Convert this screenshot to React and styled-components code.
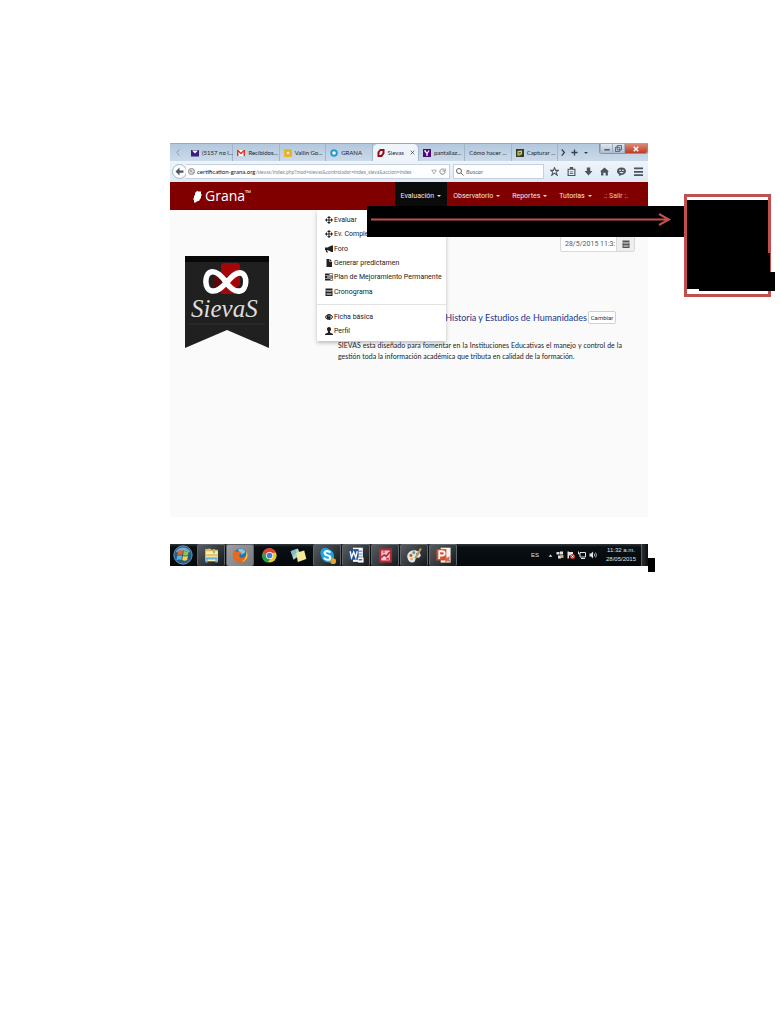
import React from "react";
import styled, { createGlobalStyle, css } from "styled-components";

const body = 'Roboto, "Liberation Sans", Arial, sans-serif';
const ui = 'Lato, "Open Sans", sans-serif';
const brand = '"Open Sans", "Noto Sans", sans-serif';

const GlobalStyle = createGlobalStyle`
  *, *::before, *::after { box-sizing: border-box; }
  body { margin: 0; background: #fff; font-family: ${body}; color: #333; }
  button, input { font: inherit; color: inherit; margin: 0; padding: 0; border: 0; background: none; }
  svg { display: block; flex: none; }
`;

const Page = styled.main`
  min-height: 100vh;
  padding: 143px 133px 0 170px;
`;
const Capture = styled.div`
  position: relative;
`;

/* Browser chrome */
const TabStrip = styled.div`
  display: flex;
  height: 18px;
  background: linear-gradient(#b3c8dd, #cbdaea);
  border-top: 1px solid #9aa9ba;
  font: 6px/17px ${ui};
  color: #1c252e;
`;
const StripButton = styled.button`
  width: ${(p) => p.$w || 11}px;
  display: grid;
  place-items: center;
  color: ${(p) => (p.$dim ? "#8195aa" : "#333f4c")};
`;
const Tabs = styled.div`
  flex: 1;
  min-width: 0;
  display: flex;
`;
const Tab = styled.button`
  flex: 1 1 0;
  min-width: 0;
  display: flex;
  align-items: center;
  gap: 3px;
  padding: 0 3px 0 4px;
  border-right: 1px solid #a3b5c8;
  white-space: nowrap;
  ${(p) =>
    p.$active &&
    css`
      background: #eef4fa;
      border-radius: 5px 5px 0 0;
    `}
`;
const TabLabel = styled.span`
  flex: 1;
  text-align: left;
`;
const WindowControls = styled.div`
  display: flex;
  width: 49px;
  height: 10px;
  border: 1px solid #8593a3;
  border-top: 0;
  border-radius: 0 0 3px 3px;
  overflow: hidden;
`;
const WindowButton = styled.button`
  flex: ${(p) => (p.$close ? 2 : 1)};
  display: grid;
  place-items: center;
  color: ${(p) => (p.$close ? "#fff" : "#4d5b6b")};
  background: ${(p) =>
    p.$close ? "linear-gradient(#d98a78, #c03a22)" : "linear-gradient(#dfe7f0, #aebdcf)"};
  border-left: 1px solid #a1afbf;
`;
const AddressBar = styled.div`
  display: flex;
  align-items: center;
  height: 21px;
  padding: 0 5px 0 2px;
  background: linear-gradient(#eef4fa, #dfe9f4);
  font: 6px/14px ${ui};
`;
const BackButton = styled.button`
  width: 15px;
  height: 15px;
  flex: none;
  display: grid;
  place-items: center;
  border: 1px solid #aab7c5;
  border-radius: 50%;
  background: #fbfdff;
  color: #4a5561;
`;
const Field = styled.label`
  display: flex;
  align-items: center;
  gap: 2px;
  height: 15px;
  padding: 0 3px 0 2px;
  background: #fdfeff;
  border: 1px solid #c6d1dd;
  min-width: 0;
`;
const UrlField = styled(Field)`
  flex: 1;
  margin-left: -1px;
  border-left: 0;
`;
const SearchField = styled(Field)`
  width: 91px;
  margin-left: 3px;
`;
const Url = styled.div`
  flex: 1;
  white-space: nowrap;
  color: #7f868d;
  font-size: 5px;
  b { font-weight: 400; font-size: 6px; color: #111; }
`;
const TextInput = styled.input`
  width: 100%;
  min-width: 0;
  outline: 0;
  &::placeholder { color: #666; font-style: italic; opacity: 1; }
`;
const Tools = styled.div`
  display: flex;
  justify-content: space-between;
  width: 93px;
  margin-left: 6px;
  color: #4a5561;
`;
const IconButton = styled.button`
  display: grid;
  place-items: center;
`;

/* Site */
const SiteHeader = styled.header`
  display: flex;
  justify-content: space-between;
  height: 28px;
  padding: 0 14px 0 23px;
  background: #800000;
`;
const Brand = styled.a`
  display: flex;
  align-items: center;
  gap: 3px;
  color: #fff;
  text-decoration: none;
  font: 14px/28px ${brand};
  sup { font-size: 8px; line-height: 0; vertical-align: 5px; }
`;
const Nav = styled.nav`
  display: flex;
`;
const NavLink = styled.a`
  display: flex;
  align-items: center;
  gap: 3px;
  padding: 0 6px;
  color: ${(p) => (p.$dim ? "#e0c4c4" : "#f0e6e6")};
  background: ${(p) => (p.$active ? "#0b0b0b" : "transparent")};
  font-size: 7px;
  text-decoration: none;
  white-space: nowrap;
`;
const Caret = styled.span`
  border: 2px solid transparent;
  border-top-color: currentColor;
  border-bottom: 0;
`;
const Content = styled.section`
  position: relative;
  display: flex;
  gap: 69px;
  min-height: 307px;
  padding: 26px 26px 0 15px;
  background: #fafafa;
`;
const Emblem = styled.div`
  flex: none;
  margin-top: 20px;
`;
const Main = styled.div`
  flex: 1;
  min-width: 0;
`;
const DateGroup = styled.div`
  display: flex;
  width: 75px;
  height: 16px;
  margin: 0 -13px 0 auto;
  border: 1px solid #d8d8d8;
  border-radius: 2px;
  background: #fff;
  font-size: 7px;
  color: #555;
`;
const DateInput = styled.input`
  flex: 1;
  min-width: 0;
  padding-left: 4px;
  outline: 0;
`;
const DateButton = styled.button`
  width: 18px;
  display: grid;
  place-items: center;
  background: #eee;
  border-left: 1px solid #d8d8d8;
`;
const TitleRow = styled.div`
  display: flex;
  justify-content: flex-end;
  align-items: center;
  gap: 1px;
  margin: 59px 6px 0 0;
`;
const Title = styled.h1`
  margin: 0;
  font: 400 9px/12px ${ui};
  color: #17388a;
  white-space: nowrap;
`;
const ChangeButton = styled.button`
  width: 28px;
  height: 13px;
  border: 1px solid #d0d0d0;
  border-radius: 2px;
  background: #fff;
  font-size: 6px;
  line-height: 10px;
`;
const Intro = styled.p`
  margin: 16px 0 0;
  font: 7px/11px ${ui};
  color: #222;
  text-align: justify;
`;
const Menu = styled.div`
  position: absolute;
  left: 147px;
  top: 0;
  width: 129px;
  padding: 3px 0;
  background: #fff;
  box-shadow: 0 2px 4px rgba(0, 0, 0, 0.25);
`;
const MenuGroup = styled.ul`
  display: grid;
  grid-auto-rows: 1fr;
  min-height: ${(p) => p.$h}px;
  margin: 0;
  padding: 0 8px;
  list-style: none;
`;
const MenuLink = styled.a`
  display: flex;
  align-items: center;
  gap: 1px;
  height: 100%;
  font-size: 7px;
  line-height: 14px;
  color: #222;
  text-decoration: none;
  white-space: nowrap;
`;
const Rule = styled.hr`
  height: 1px;
  margin: 5px 0;
  border: 0;
  background: #e2e2e2;
`;

/* Taskbar */
const Taskbar = styled.footer`
  display: flex;
  height: 22px;
  margin-top: 27px;
  background: linear-gradient(#30363a, #0a0f13 3px, #05090c);
  color: #dde2e6;
`;
const Start = styled.button`
  width: 26px;
  display: grid;
  place-items: center;
`;
const Task = styled.button`
  width: 28px;
  margin-left: 1px;
  display: grid;
  place-items: center;
  ${(p) =>
    p.$open &&
    css`
      border: 1px solid #5e6468;
      border-bottom: 0;
      border-radius: 2px;
      background: ${p.$current ? "linear-gradient(135deg, #9d9fa4, #77797f)" : "linear-gradient(135deg, #575c60, #15191c)"};
    `}
`;
const Tray = styled.div`
  display: flex;
  align-items: center;
  gap: 3px;
  margin-left: auto;
  font: 6px/9px "Liberation Sans", sans-serif;
`;
const Lang = styled.span`
  margin-right: 6px;
`;
const Clock = styled.time`
  margin: 0 2px 0 6px;
  text-align: center;
  white-space: nowrap;
`;
const ShowDesktop = styled.button`
  width: 7px;
  height: 22px;
  border-left: 1px solid #555b60;
  background: linear-gradient(90deg, #2c3135, #0a0d10);
`;

/* Annotations laid over the capture */
const Strike = styled.div`
  position: absolute;
  left: 197px;
  top: 63px;
  width: 318px;
  height: 31px;
  background: #000;
`;
const Callout = styled.div`
  position: absolute;
  left: 514px;
  top: 51px;
  width: 91px;
  height: 103px;
`;
const Nub = styled.div`
  position: absolute;
  left: 478px;
  top: 415px;
  width: 7px;
  height: 14px;
  background: #000;
`;

const Svg = ({ s = 8, h, v = 16, children }) => (
  <svg width={s} height={h || s} viewBox={`0 0 ${v} ${v}`} fill="currentColor" aria-hidden="true">
    {children}
  </svg>
);

const glyphs = {
  move: <path d="M8 0l4 4H9v3h3V4l4 4-4 4V9H9v3h3l-4 4-4-4h3V9H4v3L0 8l4-4v3h3V4H4z" />,
  horn: <path d="M0 5h5l8-4v13l-8-4H4l2 5H3L1 10H0zM13 1h3v13h-3z" />,
  file: <path d="M3 0h6v6h5v10H3zM10 0l4 5h-4z" />,
  tasks: <path fillRule="evenodd" d="M0 1h16v4H0zM9 2v2h6V2zM0 6h16v4H0zM4 7v2h11V7zM0 11h16v4H0zM11 12v2h4v-2z" />,
  calendar: <path fillRule="evenodd" d="M1 1h14v3H1zM1 5h14v11H1zM3 7v1h10V7zM3 10v1h10v-1zM3 13v1h10v-1z" />,
  eye: <path fillRule="evenodd" d="M8 2c4 0 7 4 8 6-1 2-4 6-8 6S1 10 0 8c1-2 4-6 8-6zM2 8c1 2 3 4 6 4s5-2 6-4c-1-1-2-3-4-3a4 4 0 1 1-5 0C4 5 3 7 2 8zM7 5v2h2V5z" />,
  user: <path d="M8 0c3 0 4 2 4 4s-1 4-2 5v2l6 3v2H0v-2l6-3V9C5 8 4 6 4 4s1-4 4-4z" />,
};

const menuTop = [
  ["move", "Evaluar"],
  ["move", "Ev. Complementaria"],
  ["horn", "Foro"],
  ["file", "Generar predictamen"],
  ["tasks", "Plan de Mejoramiento Permanente"],
  ["calendar", "Cronograma"],
];
const menuBottom = [
  ["eye", "Ficha básica"],
  ["user", "Perfil"],
];

const Items = ({ list, h }) => (
  <MenuGroup $h={h}>
    {list.map(([icon, label]) => (
      <li key={label}>
        <MenuLink href="#">
          <Svg s={8}>{glyphs[icon]}</Svg>
          {label}
        </MenuLink>
      </li>
    ))}
  </MenuGroup>
);

const favicons = {
  mail: <><path fill="#35207c" d="M0 2h16v13H0z" /><path fill="#fff" d="M2 3h12L8 9z" /></>,
  gmail: <><path fill="#fff" d="M1 2h14v12H1z" /><path fill="#d63b30" d="M0 2h3l5 5 5-5h3v12h-3V6l-5 5-5-5v8H0z" /></>,
  outlook: <><rect width="16" height="16" rx="2" fill="#edb528" /><circle cx="8" cy="8" r="4" fill="#fff2ad" stroke="#a77b0c" /></>,
  ring: <circle cx="8" cy="8" r="5.500" fill="#fff" stroke="#249bd0" strokeWidth="4" />,
  sievas: <path fill="#970d12" fillRule="evenodd" d="M6 0h9v9l-5 7H1V6zM7 4L5 7v5h3l3-4V4z" />,
  yahoo: <><path fill="#4c0a79" d="M0 0h16v16H0z" /><path fill="none" stroke="#fff" strokeWidth="2.500" d="M3 3l5 6 4-6M8 9v5M5 3h1" /></>,
  note: <><path fill="#343c2c" d="M0 0h16v16H0z" /><path fill="#d9cf67" d="M3 4l9-1v7l-4 3H3z" /><path stroke="#39402a" strokeWidth="1.500" d="M5 7h5M5 10h4" /></>,
};
const tabs = [
  ["mail", "(5157 no l..."],
  ["gmail", "Recibidos..."],
  ["outlook", "Vallin Go..."],
  ["ring", "GRANA"],
  ["sievas", "Sievas", true],
  ["yahoo", "pantallaz..."],
  [null, "Cómo hacer ..."],
  ["note", "Capturar ..."],
];

const tools = {
  "Marcar página": <path fill="none" stroke="currentColor" strokeWidth="1.800" d="M8 1l2 5h5l-4 3 2 6-5-4-5 4 2-6-4-3h5z" />,
  Marcadores: <path fillRule="evenodd" d="M5 0h6v3h4v13H1V3h4zM3 5v9h10V5zM5 7h6v1H5zM5 10h6v2H5z" />,
  Descargas: <path d="M5 1h6v6h4l-7 8-7-8h4z" />,
  Inicio: <path d="M8 1l8 7h-2v7h-4v-5H6v5H2V8H0z" />,
  Chat: <path fillRule="evenodd" d="M8 1c5 0 8 3 8 6s-3 7-8 7l-5 2 1-3C1 12 0 9 0 7c0-3 3-6 8-6zM4 5v2h3V5zM9 5v2h3V5zM4 9c2 3 6 3 8 0z" />,
  "Menú": <path d="M0 1h16v3H0zM0 7h16v3H0zM0 13h16v3H0z" />,
};

const tasks = {
  Explorador: [1, <><path fill="#d9bb62" d="M3 3l7-1 2 2h9v16H3z" /><path fill="#f9eda9" d="M4 6h17v14H4z" /><path fill="#a1b979" d="M14 3h3v6h-3z" /><path fill="#e3c368" d="M4 10h17v3H4z" /><path fill="none" stroke="#6db4dc" strokeWidth="3" d="M5 22v-6h14v6" /></>],
  Firefox: [2, <><circle cx="12" cy="12" r="10" fill="#2375b5" /><path fill="#86c6e4" d="M8 4c4-3 9-1 11 3l-5 4z" /><path fill="#e8681c" d="M3 4l4 3c3-1 5 0 7 2l-4 2c0 5 6 7 11 0 1-5-1-7-2-9 9 10 1 21-8 20C1 21-1 11 3 4z" /><path fill="#ffc83a" d="M20 5c5 9-1 16-7 16 5-2 8-8 7-16z" /></>],
  Chrome: [0, <><circle cx="12" cy="12" r="10" fill="#f3c823" /><path fill="#dc4334" d="M3 7c4-8 15-7 18 1h-9L8 14z" /><path fill="#2a9d4b" d="M3 7l6 8 4 1-3 6C2 21 0 13 3 7z" /><circle cx="12" cy="12" r="5" fill="#fff" /><circle cx="12" cy="12" r="4" fill="#3e80d7" /></>],
  Notas: [0, <><path fill="#a9d4cb" d="M1 6l10-4 4 9-10 7z" /><path fill="#f3e996" d="M9 8l11-3 3 12-12 4z" /><path fill="#80b6d0" d="M1 6l7-3 1 5-5 5z" /></>],
  Skype: [1, <><circle cx="9" cy="8" r="7" fill="#18a5e5" /><circle cx="14" cy="15" r="7" fill="#18a5e5" /><circle cx="12" cy="12" r="9" fill="#18a5e5" /><path fill="none" stroke="#fff" strokeWidth="3" d="M16 8c-3-4-9-2-8 1 1 4 8 2 8 6 0 4-7 4-9 0" /><circle cx="20" cy="20" r="4" fill="#e5a62b" /></>],
  Word: [1, <><path fill="#f4f8fd" d="M7 1h14v20H7z" /><path fill="#7aa1cf" d="M15 5h5v2h-5zM15 9h5v2h-5zM15 13h5v2h-5z" /><path fill="#225295" d="M1 3h14v15H1z" /><path fill="none" stroke="#fff" strokeWidth="2" d="M3 6l2 9 3-8 3 8 2-9" /><path fill="#fff" d="M14 15h8v7h-8z" /><path fill="#386cb0" d="M15 17h5v2h-5z" /></>],
  Imagen: [1, <><path fill="#b92636" d="M3 2h18v20H3z" /><path fill="#f2c7cc" d="M6 5h12v14H6z" /><path fill="none" stroke="#a52433" strokeWidth="2" d="M6 15l4-4 3 2 5-6" /><path fill="#c04552" d="M8 6h3v2H8zM13 15h4v3h-4z" /></>],
  Paint: [1, <><path fill="#dce8ee" d="M2 15C0 7 11 1 18 7c6 5 1 9-2 8-4-1-1 7-7 7-4 0-6-3-7-7z" /><circle cx="7" cy="12" r="2" fill="#d7413c" /><circle cx="11" cy="8" r="2" fill="#4f9f53" /><circle cx="16" cy="10" r="2" fill="#3f82c2" /><circle cx="8" cy="17" r="2" fill="#e6b83e" /><path stroke="#c7964f" strokeWidth="3" d="M13 16l8-14" /></>],
  PowerPoint: [1, <><path fill="#fcf2ed" d="M8 1h14v21H8z" /><path fill="#d1512c" d="M2 3h14v16H2z" /><path fill="none" stroke="#fff" strokeWidth="2.500" d="M6 17V6h4c5 0 5 6 0 6H6" /><path fill="#d86b48" d="M14 13l3 2 4-2-1 4 2 4-4-1-4 2 1-4z" /></>],
};

export default function App() {
  return (
    <Page>
      <GlobalStyle />
      <Capture>
        <TabStrip>
          <StripButton $w={17} $dim aria-label="Pestañas anteriores">
            <Svg s={7}><path d="M10 1L4 8l6 7" fill="none" stroke="currentColor" strokeWidth="2" /></Svg>
          </StripButton>
          <Tabs>
            {tabs.map(([icon, label, active]) => (
              <Tab key={label} $active={active}>
                {icon && <Svg s={8}>{favicons[icon]}</Svg>}
                <TabLabel>{label}</TabLabel>
                {active && <Svg s={5}><path d="M2 2l12 12M14 2L2 14" stroke="currentColor" strokeWidth="2" /></Svg>}
              </Tab>
            ))}
          </Tabs>
          <StripButton aria-label="Pestañas siguientes">
            <Svg s={7}><path d="M4 1l6 7-6 7" fill="none" stroke="currentColor" strokeWidth="3" /></Svg>
          </StripButton>
          <StripButton aria-label="Nueva pestaña">
            <Svg s={7}><path d="M8 1v14M1 8h14" stroke="currentColor" strokeWidth="3" /></Svg>
          </StripButton>
          <StripButton aria-label="Lista de pestañas"><Caret /></StripButton>
          <StripButton as="span" $w={8} />
          <WindowControls>
            <WindowButton aria-label="Minimizar"><Svg s={6}><path d="M1 8h14v4H1z" /></Svg></WindowButton>
            <WindowButton aria-label="Restaurar"><Svg s={7}><path d="M5 1h10v10H5zM1 5h10v10H1z" fill="none" stroke="currentColor" strokeWidth="2" /></Svg></WindowButton>
            <WindowButton $close aria-label="Cerrar"><Svg s={6}><path d="M2 2l12 12M14 2L2 14" stroke="currentColor" strokeWidth="4" /></Svg></WindowButton>
          </WindowControls>
        </TabStrip>

        <AddressBar>
          <BackButton aria-label="Atrás">
            <Svg s={9}><path d="M8 1L1 8l7 7v-5h7V6H8z" /></Svg>
          </BackButton>
          <UrlField as="div">
            <Svg s={7}><circle cx="8" cy="8" r="7" fill="#ddd" stroke="#888" strokeWidth="2" /><path d="M4 4l5 2-2 5zM11 8l3 2-3 3z" fill="#888" /></Svg>
            <Url><b>certification-grana.org</b>/sievas/index.php?mod=sievas&amp;controlador=index_sieva&amp;accion=index</Url>
            <Svg s={6}><path d="M2 3h12L8 13z" fill="none" stroke="#999" strokeWidth="2" /></Svg>
            <Svg s={7}><path d="M14 8a6 6 0 1 1-3-5M14 1v6H8" fill="none" stroke="#777" strokeWidth="2" /></Svg>
          </UrlField>
          <SearchField>
            <Svg s={8}><path d="M10 10l5 5M11 6A5 5 0 1 1 1 6a5 5 0 0 1 10 0z" fill="none" stroke="#666" strokeWidth="2" /></Svg>
            <TextInput type="search" aria-label="Buscar" placeholder="Buscar" />
          </SearchField>
          <Tools>
            {Object.entries(tools).map(([label, glyph]) => (
              <IconButton key={label} aria-label={label}><Svg s={9}>{glyph}</Svg></IconButton>
            ))}
          </Tools>
        </AddressBar>

        <SiteHeader>
          <Brand href="#">
            <svg width="9" height="13" viewBox="0 0 9 13" fill="#fff" aria-hidden="true">
              <path d="M5 1l1 1 1-1 1 1 0 2 1 1-1 1 0 2-1 1-1 2-1 0-2 1-1 1-1-1 0-2-1-1 1-1 0-2 1-1 0-2 1-1 1-1z" />
            </svg>
            <span>Grana<sup>™</sup></span>
          </Brand>
          <Nav>
            <NavLink href="#" $active>Evaluación <Caret /></NavLink>
            <NavLink href="#">Observatorio <Caret /></NavLink>
            <NavLink href="#">Reportes <Caret /></NavLink>
            <NavLink href="#">Tutorías <Caret /></NavLink>
            <NavLink href="#" $dim>.: Salir :.</NavLink>
          </Nav>
        </SiteHeader>

        <Content>
          <Emblem>
            <svg width="84" height="92" viewBox="0 0 84 92" role="img" aria-label="SievaS">
              <path fill="#202020" d="M0 0h84v92L42 74 0 92z" />
              <path fill="#080808" d="M0 0h84v6H0z" />
              <path fill="#a50508" d="M38 7h15l2 2v20l-3 2-2 7H36V9z" />
              <path fill="#5b0709" d="M29 19l9 5-1 7-8 1z" />
              <path fill="none" stroke="#fff" strokeWidth="5.500" d="M41 26C35 18 30 15 26 16c-7 2-7 18 1 19 6 1 11-5 15-9 5-6 9-10 14-9 7 2 6 17-1 18-6 1-10-3-14-9z" />
              <text x="6" y="61" fill="#dedede" fontFamily="Liberation Serif, serif" fontStyle="italic" fontSize="25">SievaS</text>
              <path stroke="#303030" d="M4 68h76" />
            </svg>
          </Emblem>
          <Main>
            <DateGroup>
              <DateInput type="text" aria-label="Fecha" defaultValue="28/5/2015 11:3:" />
              <DateButton aria-label="Abrir calendario"><Svg s={8}>{glyphs.calendar}</Svg></DateButton>
            </DateGroup>
            <TitleRow>
              <Title>n Historia y Estudios de Humanidades</Title>
              <ChangeButton>Cambiar</ChangeButton>
            </TitleRow>
            <Intro>
              SIEVAS esta diseñado para fomentar en la Instituciones Educativas el manejo y control de la
              gestión toda la información académica que tributa en calidad de la formación.
            </Intro>
          </Main>
          <Menu>
            <Items list={menuTop} h={86} />
            <Rule />
            <Items list={menuBottom} h={28} />
          </Menu>
        </Content>

        <Taskbar>
          <Start aria-label="Inicio de Windows">
            <Svg s={20} v={24}>
              <circle cx="12" cy="12" r="11" fill="#235a88" stroke="#79a9c7" />
              <path fill="#76adcf" d="M3 9C6 1 18 1 21 9c-6-3-12-3-18 0z" />
              <path fill="#e9642c" d="M6 7c2-1 4-1 6 0l-1 5c-2-1-4-1-6 0z" />
              <path fill="#8dc63f" d="M13 7c2 1 4 1 6 0l-1 5c-2 1-4 1-6 0z" />
              <path fill="#4fb4e8" d="M5 13c2-1 4-1 6 0l-1 5c-2-1-4-1-6 0z" />
              <path fill="#fbcf3b" d="M12 13c2 1 4 1 6 0l-1 5c-2 1-4 1-6 0z" />
            </Svg>
          </Start>
          {Object.entries(tasks).map(([label, [state, glyph]]) => (
            <Task key={label} aria-label={label} $open={state > 0} $current={state === 2}>
              <Svg s={17} v={24}>{glyph}</Svg>
            </Task>
          ))}
          <Tray>
            <Lang>ES</Lang>
            <Svg s={5}><path d="M2 12l6-7 6 7z" /></Svg>
            <Svg s={8}><path d="M1 2h6v5H1zM8 1h6v6H8zM4 9h6v6H4z" /><path fill="#d8a34a" d="M9 8h6v6H9z" /></Svg>
            <Svg s={8}><path d="M1 1h3v14H1zM4 2h8v7H4z" /><circle cx="11" cy="11" r="5" fill="#d33b32" /><path stroke="#fff" strokeWidth="2" d="M9 9l4 4M13 9l-4 4" /></Svg>
            <Svg s={8}><path fill="none" stroke="currentColor" strokeWidth="2" d="M4 3h11v9H4zM1 1v5h3M6 15h8" /></Svg>
            <Svg s={8}><path d="M1 5h3l4-4v14l-4-4H1z" /><path fill="none" stroke="currentColor" strokeWidth="1.500" d="M10 5q3 3 0 6M13 3q4 5 0 10" /></Svg>
            <Clock>11:32 a.m.<br />28/05/2015</Clock>
            <ShowDesktop aria-label="Mostrar escritorio" />
          </Tray>
        </Taskbar>

        <Strike>
          <svg width="318" height="31" viewBox="0 0 318 31" fill="none" stroke="#c0504d" strokeWidth="2" aria-hidden="true">
            <path d="M4 13.500h297M292 8l10 5.500-10 5.500" />
          </svg>
        </Strike>
        <Callout>
          <svg width="91" height="103" viewBox="0 0 91 103" aria-hidden="true">
            <path fill="#fff" stroke="#c0504d" strokeWidth="3" d="M1.500 1.500h84v100h-84z" />
            <path d="M3 6h81v53h2v19h5v19H15v-2H3z" />
          </svg>
        </Callout>
        <Nub />
      </Capture>
    </Page>
  );
}
